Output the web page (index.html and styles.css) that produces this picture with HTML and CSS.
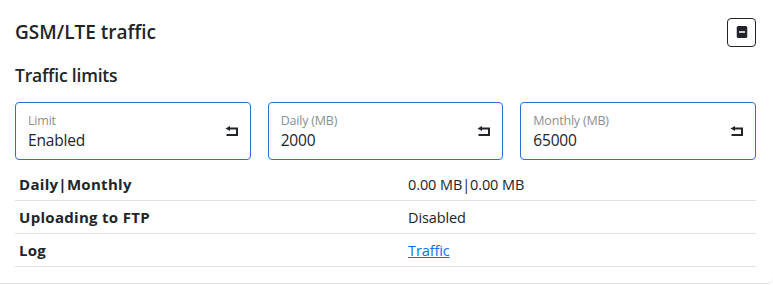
FILE: index.html
```html
<!DOCTYPE html>
<html lang="en">
<head>
    <meta charset="UTF-8">
    <title>GSM/LTE traffic</title>
    <link rel="stylesheet" href="styles.css">
</head>
<body>
    <div class="card">
        <div class="card-header">
            <h5 class="card-title">GSM/LTE traffic</h5>
            <button class="collapse-btn" title="Collapse">
                <svg width="12" height="12" viewBox="0 0 16 16"><rect x="1" y="0" width="14" height="16" rx="2" fill="#212529"/><rect x="4" y="7" width="8" height="2" fill="#fff"/></svg>
            </button>
        </div>

        <h6 class="section-title">Traffic limits</h6>

        <div class="limits">
            <div class="field">
                <span class="field-label">Limit</span>
                <span class="field-value">Enabled</span>
                <svg class="reset" width="14" height="11" viewBox="0 0 14 11"><path d="M4 2.5 H12 V9 H1.5" fill="none" stroke="#212529" stroke-width="2"/><path d="M0.5 2.5 L5 0 V5 Z" fill="#212529"/></svg>
            </div>
            <div class="field">
                <span class="field-label">Daily (MB)</span>
                <span class="field-value">2000</span>
                <svg class="reset" width="14" height="11" viewBox="0 0 14 11"><path d="M4 2.5 H12 V9 H1.5" fill="none" stroke="#212529" stroke-width="2"/><path d="M0.5 2.5 L5 0 V5 Z" fill="#212529"/></svg>
            </div>
            <div class="field">
                <span class="field-label">Monthly (MB)</span>
                <span class="field-value">65000</span>
                <svg class="reset" width="14" height="11" viewBox="0 0 14 11"><path d="M4 2.5 H12 V9 H1.5" fill="none" stroke="#212529" stroke-width="2"/><path d="M0.5 2.5 L5 0 V5 Z" fill="#212529"/></svg>
            </div>
        </div>

        <table class="info">
            <tr>
                <th>Daily|Monthly</th>
                <td>0.00 MB|0.00 MB</td>
            </tr>
            <tr>
                <th>Uploading to FTP</th>
                <td>Disabled</td>
            </tr>
            <tr>
                <th>Log</th>
                <td><a href="#" class="log-link">Traffic</a></td>
            </tr>
        </table>
    </div>
</body>
</html>
```

FILE: styles.css
```css
body {
    margin: 0;
    background: #fff;
    color: #212529;
    font-family: 'Open Sans', 'Noto Sans', sans-serif;
}

.card {
    padding: 0 17px 16px 15px;
    border-bottom: 1px solid #dee2e6;
    border-bottom-right-radius: 6px;
}

.card-header {
    height: 64px;
    display: flex;
    justify-content: space-between;
    align-items: center;
}

.card-title {
    margin: 0;
    font-size: 19px;
    font-weight: 600;
    line-height: 24px;
}

.collapse-btn {
    width: 29px;
    height: 29px;
    padding: 0;
    display: flex;
    justify-content: center;
    align-items: center;
    background: #fff;
    border: 1px solid #212529;
    border-radius: 4px;
    cursor: pointer;
}

.section-title {
    margin: 0 0 16px;
    font-size: 17.5px;
    font-weight: 600;
    line-height: 22px;
    letter-spacing: -0.2px;
}

.limits {
    display: grid;
    grid-template-columns: 1fr 1fr 1fr;
    gap: 17px;
}

.field {
    position: relative;
    height: 58px;
    box-sizing: border-box;
    padding: 11px 12px 0;
    display: flex;
    flex-direction: column;
    border: 1px solid #2f6fd0;
    border-radius: 4px;
}

.field-label {
    font-size: 12.5px;
    line-height: 14px;
    color: #8a8f94;
    letter-spacing: -0.2px;
}

.field-value {
    margin-top: 2px;
    font-size: 15.5px;
    line-height: 20px;
    letter-spacing: -0.2px;
}

.reset {
    position: absolute;
    right: 11px;
    top: 23px;
}

.info {
    width: 100%;
    margin-top: 8px;
    border-collapse: collapse;
    font-size: 14.5px;
    letter-spacing: -0.1px;
}

.info th,
.info td {
    height: 32px;
    padding: 0 4px;
    text-align: left;
    border-bottom: 1px solid #dee2e6;
}

.info th {
    width: 381px;
    font-size: 15px;
    font-weight: 700;
    letter-spacing: 0.3px;
}

.log-link {
    color: #0d6efd;
}
```
